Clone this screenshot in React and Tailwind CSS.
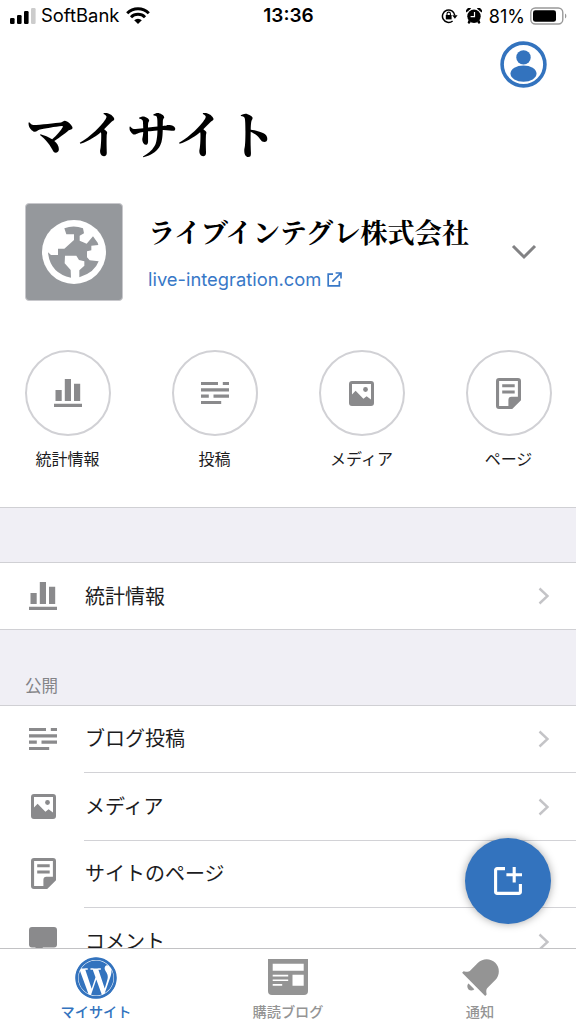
import { FaWordpress } from "react-icons/fa";

const atalhos = [
  { label: "統計情報", Icon: StatsIcon },
  { label: "投稿", Icon: PostsIcon },
  { label: "メディア", Icon: MediaIcon },
  { label: "ページ", Icon: PageIcon },
];

const publicar = [
  { label: "ブログ投稿", Icon: PostsIcon, height: "h-[67px]" },
  { label: "メディア", Icon: MediaIcon, height: "h-[68px]" },
  { label: "サイトのページ", Icon: PageIcon, height: "h-[67px]" },
  { label: "コメント", Icon: CommentIcon, height: "h-[68px]" },
];

function StatsIcon() {
  return (
    <svg width="28" height="28" viewBox="0 0 28 28" fill="currentColor">
      <path d="M1.5 11h6.2v11H1.5zM10.8 0H17v22h-6.2zM20 4.7h6.2V22H20zM0 24.8h28V28H0z" />
    </svg>
  );
}

function PostsIcon() {
  return (
    <svg width="28" height="22" viewBox="0 0 28 22" fill="currentColor">
      <path d="M0 0h17v3.1H0zM21.8 0H28v3.1h-6.2zM0 6.3h28v3.1H0zM0 12.6h7.8v3.1H0zM12.5 12.6H28v3.1H12.5zM0 18.9h20.2V22H0z" />
    </svg>
  );
}

function MediaIcon() {
  return (
    <svg width="25" height="25" viewBox="0 0 25 25" fill="currentColor">
      <path
        fillRule="evenodd"
        d="M3 0h19a3 3 0 0 1 3 3v19a3 3 0 0 1-3 3H3a3 3 0 0 1-3-3V3a3 3 0 0 1 3-3zM3 3v10.4l3.6-3.6 7.8 8 3.2-2.6 4.4 3.4V3z"
      />
      <circle cx="16.5" cy="8.5" r="2.4" />
    </svg>
  );
}

function PageIcon() {
  return (
    <svg width="25" height="31" viewBox="0 0 25 31" fill="currentColor">
      <path
        fillRule="evenodd"
        d="M3 0h19a3 3 0 0 1 3 3v19.2L16.2 31H3a3 3 0 0 1-3-3V3a3 3 0 0 1 3-3zM3.1 3.1v24.8h9.3v-6.2a3 3 0 0 1 3-3h6.5V3.1z"
      />
      <path d="M6.2 6.3h12.5v3H6.2zM6.2 12.4h12.5v3.1H6.2z" />
    </svg>
  );
}

function CommentIcon() {
  return (
    <svg width="28" height="28" viewBox="0 0 28 28" fill="currentColor">
      <path d="M3 0h22a3 3 0 0 1 3 3v14.5a3 3 0 0 1-3 3H14L6.5 28v-7.5H3a3 3 0 0 1-3-3V3a3 3 0 0 1 3-3z" />
    </svg>
  );
}

function Chevron() {
  return (
    <svg width="12" height="18" viewBox="0 0 12 18" fill="none" stroke="#c4c4c7" strokeWidth="2.4">
      <path d="M1.5 1.5L9.5 9l-8 7.5" />
    </svg>
  );
}

function StatusBar() {
  return (
    <div className="grid h-8 grid-cols-[1fr_auto_1fr] items-center pl-[10px] pr-[9px] font-['Inter',sans-serif] text-[18.4px] text-black">
      <div className="flex items-center">
        <svg width="26" height="16" viewBox="0 0 26 16">
          <rect x="0" y="10" width="4.6" height="6" rx="1.2" />
          <rect x="7" y="7" width="4.6" height="9" rx="1.2" />
          <rect x="14" y="3" width="4.6" height="13" rx="1.2" />
          <rect x="21" y="0" width="4.6" height="16" rx="1.2" fill="#ccc" />
        </svg>
        <span className="ml-[5px]">SoftBank</span>
        <svg className="ml-[7px]" width="24" height="17" viewBox="0 0 24 17" fill="none" stroke="#000" strokeWidth="3">
          <path d="M1.2 6.2a15.4 15.4 0 0 1 21.6 0" />
          <path d="M5 10.2a10 10 0 0 1 14 0" />
          <path d="M8.2 13.2a5.4 5.4 0 0 1 7.6 0L12 17z" fill="#000" stroke="none" />
        </svg>
      </div>
      <span className="text-[19px] font-semibold">13:36</span>
      <div className="flex items-center justify-end text-[18px]">
        <svg width="17" height="16" viewBox="0 0 17 16" fill="none" stroke="#000" strokeWidth="1.5">
          <path d="M13.8 7.4A6.2 6.2 0 1 0 11.6 13" />
          <path d="M11.2 7.2h5.4l-2.7 3.6z" fill="#000" stroke="none" />
          <path d="M4.8 7h5.8v4.4H4.8z" fill="#000" stroke="none" />
          <path d="M6 7.4V5.8a1.7 1.7 0 0 1 3.4 0v1.6" strokeWidth="1.1" />
        </svg>
        <svg className="ml-[8px]" width="16" height="16" viewBox="0 0 16 16">
          <circle cx="8" cy="8.2" r="6.7" />
          <path d="M.4 4.6A3.2 3.2 0 0 1 5.2.6zM15.6 4.6A3.2 3.2 0 0 0 10.8.6zM2.5 12l2.4 2-1.8 2-1.5-1.2zM13.5 12l-2.4 2 1.8 2 1.5-1.2z" />
          <path d="M8.5 4v4.6H4.6" fill="none" stroke="#fff" strokeWidth="1.2" />
        </svg>
        <span className="ml-[7px]">81%</span>
        <svg className="ml-[5px]" width="37" height="18" viewBox="0 0 37 18">
          <rect x=".8" y="1" width="32" height="16" rx="4.5" fill="none" stroke="#999" strokeWidth="1.4" />
          <rect x="3" y="3.2" width="23" height="11.6" rx="2.4" />
          <path d="M35 6.5c1.8.8 1.8 4.2 0 5z" fill="#999" />
        </svg>
      </div>
    </div>
  );
}

function SiteHeader() {
  return (
    <div className="flex items-start pl-[25px] pr-[39px]">
      <div className="flex h-[98px] w-[98px] items-center justify-center rounded-[4px] border border-[#c8c8cc] bg-[#95989c]">
        <svg width="64" height="64" viewBox="0 0 192 192">
          <circle cx="96" cy="96" r="96" fill="#fff" />
          <path
            fill="#95989c"
            d="M67 25Q95 14 123 25L126 40L113 47V62L134 71L153 49L167 68L169 75L148 77V91L135 94V112L143 121L170 124Q158 158 112 172V151L127 137V124L111 120L103 107H69L68 130L86 150L87 173Q24 160 18 97L27 105H48V86H67L96 60V43H73Z"
          />
        </svg>
      </div>
      <div className="ml-[25px] flex-1">
        <h2 className="mt-[7px] whitespace-nowrap font-['Noto_Serif_CJK_JP','Noto_Sans_CJK_JP',serif] text-[27.2px] font-bold leading-[44px] text-black">
          ライブインテグレ株式会社
        </h2>
        <a className="mt-[12px] flex items-center font-['Inter',sans-serif] text-[18.35px] leading-[26px] text-[#3878c7]">
          live-integration.com
          <svg className="ml-[6px]" width="15" height="15" viewBox="0 0 15 15" fill="none" stroke="currentColor" strokeWidth="1.7">
            <path d="M6 2.2H1.2v11.6h11.2V9M8.6 1h5.4v5.4M14 1L5.4 9.6" />
          </svg>
        </a>
      </div>
      <svg className="mt-[41px]" width="26" height="16" viewBox="0 0 26 16" fill="none" stroke="#828284" strokeWidth="3">
        <path d="M2 2l11 11L24 2" />
      </svg>
    </div>
  );
}

function TabBar() {
  return (
    <nav className="grid h-[76px] grid-cols-3 border-t border-[#c2c2c4] bg-white text-[14.2px] font-medium leading-5 text-[#949494]">
      <div className="flex flex-col items-center pt-[8px] text-[#3373be]">
        <svg width="42" height="42" viewBox="0 0 42 42">
          <FaWordpress size={42} />
          <circle cx="21" cy="21" r="19.3" fill="none" stroke="currentColor" strokeWidth="2.8" />
        </svg>
        <span className="mt-[2px]">マイサイト</span>
      </div>
      <div className="flex flex-col items-center pt-[10px]">
        <svg width="40" height="36" viewBox="0 0 40 36">
          <path d="M0 0h40v32a4 4 0 0 1-4 4H4a4 4 0 0 1-4-4z" fill="currentColor" />
          <path d="M4.7 4.8h31v7h-31zM24.5 15.8h11.2v11H24.5zM4.7 15.8h15.5v1.7H4.7zM4.7 20.4h15.5v1.7H4.7zM4.7 25h9.5v1.7H4.7z" fill="#fff" />
        </svg>
        <span className="mt-[6px]">購読ブログ</span>
      </div>
      <div className="flex flex-col items-center pt-[4px]">
        <svg width="49" height="49" viewBox="0 0 24 24" fill="currentColor">
          <path d="M6.14 14.97l2.828 2.827c-.362.362-.862.586-1.414.586-1.105 0-2-.895-2-2 0-.552.224-1.052.586-1.414zm8.867 5.324L14.3 21 3 9.7l.706-.707 1.102.157c.754.108 1.69-.122 2.077-.51l3.885-3.884c2.34-2.34 6.135-2.34 8.475 0s2.34 6.135 0 8.475l-3.885 3.886c-.388.388-.618 1.323-.51 2.077l.157 1.1z" />
        </svg>
        <span className="-mt-px">通知</span>
      </div>
    </nav>
  );
}

export default function App() {
  return (
    <div className="relative flex h-[1024px] w-[576px] flex-col overflow-hidden bg-white font-['Noto_Sans_CJK_JP',sans-serif] text-[#1c1c1e]">
      <StatusBar />

      <main className="min-h-0 flex-1 overflow-hidden">
        <div className="flex h-[64px] justify-end pr-[29px] pt-[9px]">
          <svg width="47" height="47" viewBox="0 0 47 47" fill="#3373be">
            <circle cx="23.5" cy="23.5" r="21.4" fill="none" stroke="#3373be" strokeWidth="3.6" />
            <circle cx="23.5" cy="16.4" r="7.2" />
            <ellipse cx="23.5" cy="32.6" rx="13" ry="8.2" />
          </svg>
        </div>

        <h1 className="h-[107px] pl-[25px] font-['Noto_Serif_CJK_JP','Noto_Sans_CJK_JP',serif] text-[51.4px] font-bold leading-[72px] text-black">
          マイサイト
        </h1>

        <SiteHeader />

        <div className="mt-[49px] flex justify-between pl-[24.5px] pr-[24.5px]">
          {atalhos.map(({ label, Icon }) => (
            <div key={label} className="flex w-[86px] flex-col items-center">
              <div className="flex h-[86px] w-[86px] items-center justify-center rounded-full border-2 border-[#d1d1d5] text-[#8a8a8c]">
                <Icon />
              </div>
              <span className="mt-[10px] text-[16px] leading-6">{label}</span>
            </div>
          ))}
        </div>

        <div className="mt-[37px] h-[56px] border-y border-[#d0d0d4] bg-[#f0eff5]" />

        <div className="flex h-[66px] items-center pl-[29px] pr-[26px]">
          <div className="flex w-7 justify-center text-[#8a8a8c]">
            <StatsIcon />
          </div>
          <span className="ml-[28px] flex-1 pb-px text-[20px]">統計情報</span>
          <Chevron />
        </div>

        <div className="flex h-[77px] items-end border-y border-[#d0d0d4] bg-[#f0eff5] pb-[8px] pl-[25px] text-[16.5px] leading-6 text-[#838387]">
          公開
        </div>

        {publicar.map(({ label, Icon, height }) => (
          <div key={label} className={`flex pl-[29px] ${height}`}>
            <div className="flex w-7 items-center justify-center pb-[2px] text-[#8a8a8c]">
              <Icon />
            </div>
            <div className="ml-[27px] flex flex-1 items-center border-b border-[#d2d2d6] pl-px pr-[26px]">
              <span className="flex-1 pb-[2px] text-[20px]">{label}</span>
              <Chevron />
            </div>
          </div>
        ))}
      </main>

      <TabBar />

      <button className="absolute left-[465px] top-[838px] flex h-[86px] w-[86px] items-center justify-center rounded-full bg-[#3373be] shadow-[0_0_8px_rgba(0,0,0,0.35)]">
        <svg width="28" height="28" viewBox="0 0 28 28" fill="none" stroke="#fff" strokeWidth="3.1">
          <path d="M11 1.6H3.1a1.5 1.5 0 0 0-1.5 1.5v21.8a1.5 1.5 0 0 0 1.5 1.5h21.8a1.5 1.5 0 0 0 1.5-1.5V17M20.2 0v15.6M12.4 7.8H28" />
        </svg>
      </button>
    </div>
  );
}
